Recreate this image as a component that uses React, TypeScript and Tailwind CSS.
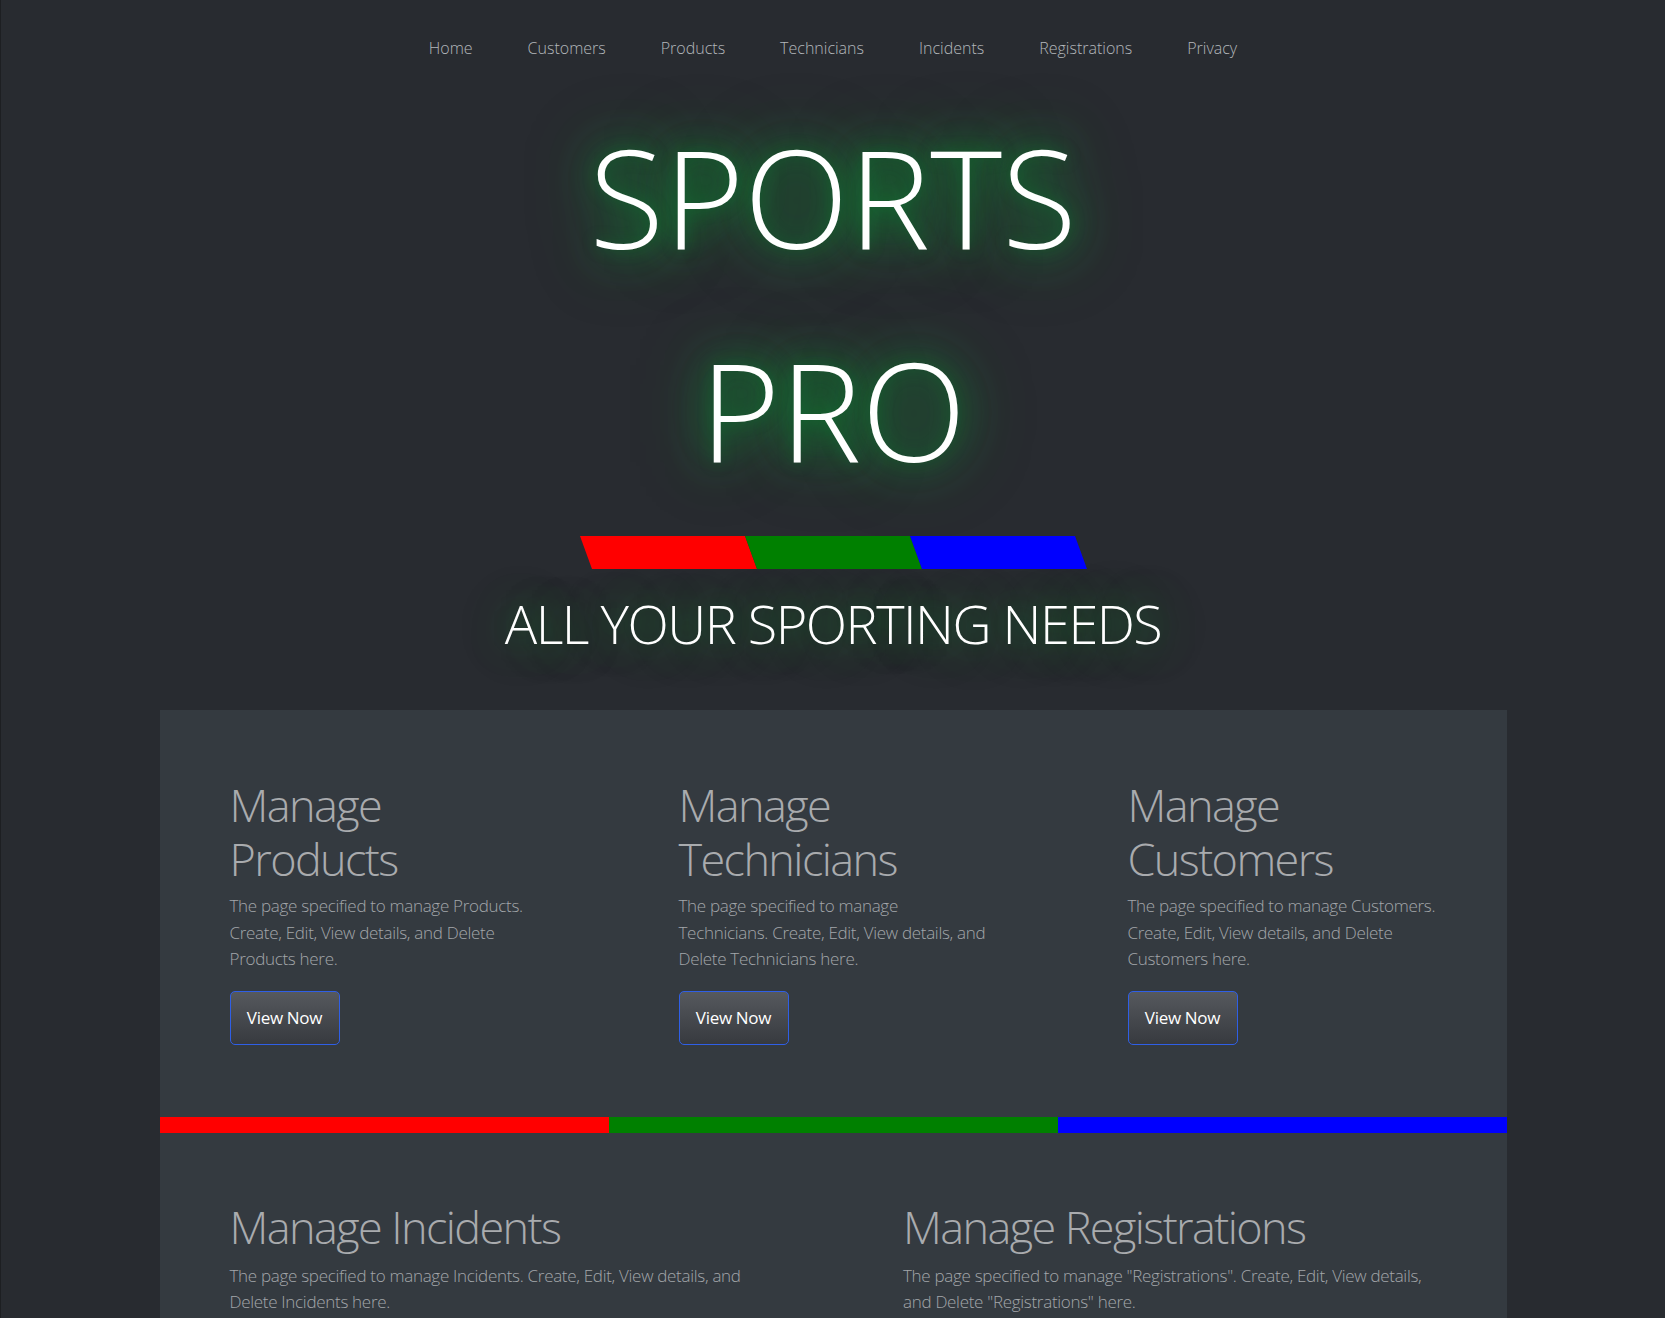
import React from "react";

const navLinks = ["Home", "Customers", "Products", "Technicians", "Incidents", "Registrations", "Privacy"];

function ViewNow() {
  return (
    <button className="mt-[18px] w-[110px] h-[54px] rounded-[5px] border border-[#2f5fe6] bg-linear-to-b from-[#56595e] to-[#373a3f] text-white text-[17px] font-normal tracking-[-0.3px]">
      View Now
    </button>
  );
}

function Card({ title, lines }: { title: string[]; lines: string[] }) {
  return (
    <div className="px-[70px]">
      <h2 className="text-[45px] leading-[54px] tracking-[-1.6px] font-light text-[#a9abae] whitespace-nowrap">
        {title.map((t) => (
          <span key={t} className="block">
            {t}
          </span>
        ))}
      </h2>
      <p className="mt-[7px] text-[17px] leading-[26.5px] tracking-[-0.3px] font-light text-[#a3a6aa] whitespace-nowrap">
        {lines.map((l) => (
          <span key={l} className="block">
            {l}
          </span>
        ))}
      </p>
      <ViewNow />
    </div>
  );
}

export default function App() {
  return (
    <main className="min-h-screen bg-[#282b30] border-l border-[#1d1f22] font-['Open_Sans',sans-serif] text-white">
      <nav className="pt-[36px] flex justify-center gap-[55px]">
        {navLinks.map((n) => (
          <a key={n} href="#" className="text-[16px] leading-[24px] font-light text-[#b3b7bb]">
            {n}
          </a>
        ))}
      </nav>

      <h1 className="mt-[68px] flex flex-col items-center gap-[76px] text-[137px] leading-[137px] font-light [text-shadow:0_0_15px_rgba(0,150,50,0.35),0_0_45px_rgba(0,200,60,0.8),0_0_70px_rgba(0,190,60,0.6)]">
        <span>SPORTS</span>
        <span>PRO</span>
      </h1>

      <div className="mt-[58px] mx-auto w-[495px] h-[33px] flex skew-x-[20deg]">
        <div className="flex-1 bg-[#ff0000]" />
        <div className="flex-1 bg-[#008000]" />
        <div className="flex-1 bg-[#0000ff]" />
      </div>

      <h3 className="mt-[27px] text-center text-[54px] leading-[54px] tracking-[-1.5px] font-light [text-shadow:0_0_35px_rgba(0,180,55,0.55),0_0_60px_rgba(0,160,50,0.45)]">
        ALL YOUR SPORTING NEEDS
      </h3>

      <section className="mt-[60px] mx-auto w-[1347px] bg-[#343a40]">
        <div className="grid grid-cols-3 pt-[68px] pb-[72px]">
          <Card
            title={["Manage", "Products"]}
            lines={["The page specified to manage Products.", "Create, Edit, View details, and Delete", "Products here."]}
          />
          <Card
            title={["Manage", "Technicians"]}
            lines={["The page specified to manage", "Technicians. Create, Edit, View details, and", "Delete Technicians here."]}
          />
          <Card
            title={["Manage", "Customers"]}
            lines={["The page specified to manage Customers.", "Create, Edit, View details, and Delete", "Customers here."]}
          />
        </div>

        <div className="flex h-[16px]">
          <div className="flex-1 bg-[#ff0000]" />
          <div className="flex-1 bg-[#008000]" />
          <div className="flex-1 bg-[#0000ff]" />
        </div>

        <div className="grid grid-cols-2 pt-[67px] pb-[72px]">
          <div className="px-[70px]">
            <h2 className="text-[45px] leading-[54px] tracking-[-1.6px] font-light text-[#a9abae]">Manage Incidents</h2>
            <p className="mt-[9px] text-[17px] leading-[26.5px] tracking-[-0.3px] font-light text-[#a3a6aa] whitespace-nowrap">
              <span className="block">The page specified to manage Incidents. Create, Edit, View details, and</span>
              <span className="block">Delete Incidents here.</span>
            </p>
            <ViewNow />
          </div>
          <div className="px-[70px]">
            <h2 className="text-[45px] leading-[54px] tracking-[-1.6px] font-light text-[#a9abae]">Manage Registrations</h2>
            <p className="mt-[9px] text-[17px] leading-[26.5px] tracking-[-0.3px] font-light text-[#a3a6aa] whitespace-nowrap">
              <span className="block">The page specified to manage "Registrations". Create, Edit, View details,</span>
              <span className="block">and Delete "Registrations" here.</span>
            </p>
            <ViewNow />
          </div>
        </div>
      </section>
    </main>
  );
}
